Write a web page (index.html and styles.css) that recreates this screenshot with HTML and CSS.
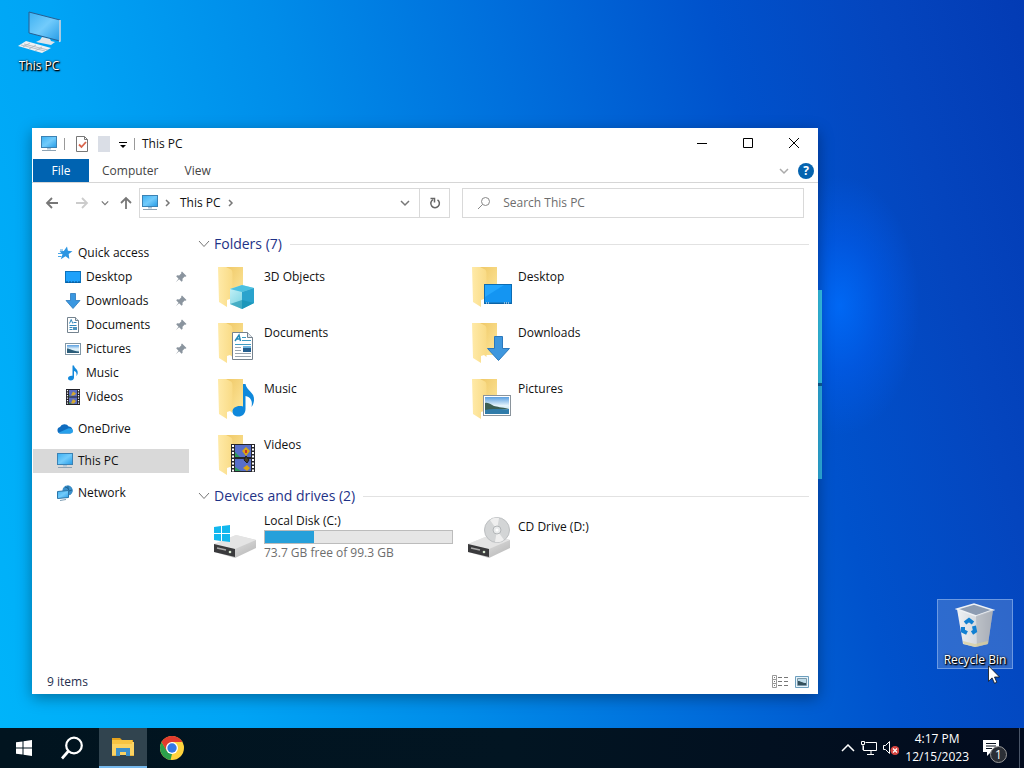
FILE: index.html
```html
<!DOCTYPE html>
<html lang="en">
<head>
	<meta charset="utf-8">
	<meta name="viewport" content="width=device-width, initial-scale=1">
	<title>This PC</title>
	<link rel="stylesheet" href="styles.css">
</head>
<body>
	<!-- icon sprite -->
	<svg class="sprite" aria-hidden="true">
		<defs>
			<linearGradient id="g-screen" x1="0" y1="0" x2="1" y2="1">
				<stop offset="0" stop-color="#3cb0f2"/><stop offset=".5" stop-color="#72cbfb"/><stop offset="1" stop-color="#259be6"/>
			</linearGradient>
			<linearGradient id="g-folder" x1="0" y1="0" x2="1" y2="0">
				<stop offset="0" stop-color="#ffeaa8"/><stop offset="1" stop-color="#f9db86"/>
			</linearGradient>
			<linearGradient id="g-back" x1="0" y1="0" x2="1" y2="1">
				<stop offset="0" stop-color="#efc765"/><stop offset="1" stop-color="#fde79c"/>
			</linearGradient>
			<linearGradient id="g-sky" x1="0" y1="0" x2="0" y2="1">
				<stop offset="0" stop-color="#5a9fe0"/><stop offset=".5" stop-color="#e4f3fb"/><stop offset="1" stop-color="#b6dcee"/>
			</linearGradient>
			<linearGradient id="g-drive" x1="0" y1="0" x2="1" y2="1">
				<stop offset="0" stop-color="#f3f3f3"/><stop offset="1" stop-color="#b4b4b4"/>
			</linearGradient>
			<linearGradient id="g-bin" x1="0" y1="0" x2="1" y2="0">
				<stop offset="0" stop-color="#eef1f4"/><stop offset=".6" stop-color="#d3d7dc"/><stop offset="1" stop-color="#a9afb9"/>
			</linearGradient>
			<linearGradient id="g-cube" x1="0" y1="0" x2="1" y2="1">
				<stop offset="0" stop-color="#c9f3f8"/><stop offset="1" stop-color="#5cc7da"/>
			</linearGradient>
		</defs>

		<symbol id="i-pc" viewBox="0 0 16 16">
			<rect x="0.5" y="0.5" width="15" height="11" fill="url(#g-screen)" stroke="#3b82b4"/>
			<path d="M6 12h4v1.500H6z" fill="#a9c3d6"/>
			<path d="M1 14.500h14" stroke="#8fa3b3" stroke-width="1"/>
		</symbol>
		<symbol id="i-pc-large" viewBox="0 0 44 44">
			<path d="M12 2l31 8v21L12 23z" fill="url(#g-screen)" stroke="#275f92" stroke-width="1"/>
			<path d="M43 10v21l-1 .5" fill="none" stroke="#d7e4ee" stroke-width="1.500"/>
			<path d="M25 27l8 2 1 2 4 1-4 3-15-3 4-2z" fill="#dfe5ea"/>
			<path d="M9 31l25 7-9 5L1 36z" fill="#eef1f4"/>
			<path d="M7 34l24 6M4 35l24 6M13 33l-7 4M19 35l-7 4M25 37l-7 4" stroke="#a9b3bd" stroke-width=".8"/>
		</symbol>
		<symbol id="i-star" viewBox="0 0 16 16">
			<path d="M10 1.500l.9 4.300 4.600.4-3.800 2.700.6 5.100-3.800-2.800-4.700 3 1.700-4.900L2.500 6.200l4.300-.3z" fill="#2d96e2"/>
			<path d="M1 8.500h4M1 11.500h3.500M3 5h3" stroke="#4aa6e6" stroke-width="1"/>
		</symbol>
		<symbol id="i-desktop" viewBox="0 0 16 16">
			<rect x="0.500" y="2.500" width="15" height="11" fill="#1ea1fb" stroke="#0b72bd"/>
			<path d="M1 13h14" stroke="#064f8a" stroke-dasharray="2 1"/>
		</symbol>
		<symbol id="i-down" viewBox="0 0 16 16">
			<path d="M5.500.500h5v7h4.500L8 15.500 1 7.500h4.500z" fill="#3a97e0" stroke="#2a78bd" stroke-width=".8"/>
		</symbol>
		<symbol id="i-doc" viewBox="0 0 16 16">
			<path d="M2.500.500h8l3 3v12h-11z" fill="#fff" stroke="#74838f"/>
			<path d="M10.500.500v3h3" fill="#dde5ea" stroke="#74838f"/>
			<path d="M4.500 6.500l1.700-4 1.600 4M8.500 5.500h3M4.500 8.500h7M4.500 10.500h3M4.500 12.500h3" fill="none" stroke="#2f88bd"/>
			<path d="M8 10h4v3H8z" fill="#4d93bd"/>
		</symbol>
		<symbol id="i-pic" viewBox="0 0 16 16">
			<rect x="0.500" y="2.500" width="15" height="11" fill="#fff" stroke="#8197a6"/>
			<path d="M2 4h12v8H2z" fill="url(#g-sky)"/>
			<path d="M2 7.500c3 0 5 2.500 12 3V12H2z" fill="#2b5d7a"/>
		</symbol>
		<symbol id="i-music" viewBox="0 0 16 16">
			<path d="M7.500.500h1.500c.3 3.200 4.300 3.500 3.700 7.700-.2 1.300-.7 2-1.300 2.800.6-3-.5-4.500-2.400-5v6.500c0 2-1.500 3-3.200 3-1.600 0-2.800-1-2.800-2.300 0-1.700 2.300-3 4.500-2.400z" fill="#1389dc"/>
		</symbol>
		<symbol id="i-video" viewBox="0 0 16 16">
			<path d="M1 0h14v16H1z" fill="#22222a"/>
			<path d="M4 1h8v6.500H4zM4 8.500h8V15H4z" fill="#5d6fc2"/>
			<path d="M8 2.500l3 2-2 2H6l1-2zM8 10l3 2-2 2.500H6l1-2.500z" fill="#d3a92e"/>
			<path d="M4 6l2.500 1.500H4zM4 13l3 2H4z" fill="#398a45"/>
			<path d="M2.500 1v14M13.500 1v14" stroke="#fff" stroke-width="1.200" stroke-dasharray="1.300 1.200"/>
		</symbol>
		<symbol id="i-cloud" viewBox="0 0 16 16">
			<path d="M3.500 12.500A3.300 3.300 0 0 1 3 6a5 5 0 0 1 8.700-.6 3.700 3.700 0 0 1 1.500 7.100z" fill="#0f6cbf"/>
			<path d="M3.500 12.500c-1 0-1.500-.3-2-.7L11 7.500c3-.8 5 .7 5 2.500s-1.300 2.500-2.800 2.500z" fill="#27a0ea"/>
		</symbol>
		<symbol id="i-network" viewBox="0 0 16 16">
			<path d="M10.500.5A5 5 0 1 1 7 9z" fill="#2c7fb8"/>
			<circle cx="10.500" cy="5.500" r="5" fill="#3b8fca"/>
			<path d="M8 2l3 1 1 3 3-1M11 1v3" fill="none" stroke="#1e6797"/>
			<path d="M.500 6.500l11-1v7l-11 1z" fill="url(#g-screen)" stroke="#2b75a8"/>
			<path d="M3 15.500l6-1" stroke="#7d9db3"/>
		</symbol>
		<symbol id="i-pin" viewBox="0 0 12 12">
			<path d="M7 .500L11.500 5l-1 .8-.8-.2-2.200 2.200.1 2-1 1-2.500-2.500L.800 11.300 3.500 7.700 1.200 5.300l1-1 2 .1 2.200-2.200-.2-.9z" fill="#8a949e"/>
		</symbol>

		<symbol id="i-folder" viewBox="0 0 48 48">
			<path d="M12 4h18v32H12z" fill="url(#g-back)"/>
			<path d="M5 4h8l5 2.500c1 .8 1.500 2 1.500 4V38l-2.500-2-3 1v7L6 39z" fill="url(#g-folder)"/>
		</symbol>
		<symbol id="i-f-3d" viewBox="0 0 48 48">
			<use href="#i-folder"/>
			<path d="M17 26l12-4 12 3v15l-12 6-12-5z" fill="url(#g-cube)"/>
			<path d="M17 26l12-4 12 3-12 4z" fill="#4cc0e0"/>
			<path d="M29 29l12-4v15l-12 6z" fill="#2aa3cd"/>
			<path d="M17 41l12-4 12 3-12 6z" fill="#158fae" opacity=".6"/>
		</symbol>
		<symbol id="i-f-desktop" viewBox="0 0 48 48">
			<use href="#i-folder"/>
			<rect x="17.500" y="21.500" width="27" height="19" fill="#24a6fd" stroke="#0c6cb3"/>
			<path d="M18 34L37 22h7v17H18z" fill="#1495f2"/>
			<path d="M18 40h26" stroke="#0a5a9a"/>
			<path d="M19 40h3M37 40h6" stroke="#fff" stroke-dasharray="1 1"/>
		</symbol>
		<symbol id="i-f-doc" viewBox="0 0 48 48">
			<use href="#i-folder"/>
			<path d="M19.500 13.500h15l5 5v22h-20z" fill="#fff" stroke="#75818c"/>
			<path d="M34.500 13.500v5h5" fill="#e3e8ec" stroke="#75818c"/>
			<path d="M22 22l4-6 1.500 6M23 20h4" fill="none" stroke="#2389b8" stroke-width="1.500"/>
			<path d="M29 18.500h4M29 21.500h9M22 25.500h16" stroke="#3e9bc2"/>
			<path d="M22 28.500h6M22 31.500h6M22 34.500h16M22 37.500h16" stroke="#9aa5af"/>
			<path d="M30 27h8v6h-8z" fill="#265f8f"/><path d="M30 27h8v2h-8z" fill="#6fb7e0"/>
		</symbol>
		<symbol id="i-f-down" viewBox="0 0 48 48">
			<use href="#i-folder"/>
			<path d="M27.500 17.500h8v12h7L31.500 41.500 20.500 29.500h7z" fill="#3e97de" stroke="#2b78bd"/>
		</symbol>
		<symbol id="i-f-music" viewBox="0 0 48 48">
			<use href="#i-folder"/>
			<path d="M30 9h2.500c1 7 9.500 8 8.500 16.500-.3 2.500-1 4.500-2.500 6.500 1.500-6-1-10-6-11v13c0 5-3.500 7.500-7 7.500s-6-2-6-5c0-4 5-6.500 10.500-5z" fill="#0f88db"/>
		</symbol>
		<symbol id="i-f-pic" viewBox="0 0 48 48">
			<use href="#i-folder"/>
			<rect x="16.500" y="20.500" width="27" height="20" fill="#fff" stroke="#8a949c"/>
			<path d="M18 22h24v17H18z" fill="url(#g-sky)"/>
			<path d="M18 28c4-1 6 2 9 3s7 1 15 3l-24 2z" fill="#3c5f54"/>
			<path d="M18 35c8-2 16 0 24-1v5H18z" fill="#2f7ba9"/>
		</symbol>
		<symbol id="i-f-video" viewBox="0 0 48 48">
			<use href="#i-folder"/>
			<path d="M18 13h24v28H18z" fill="#26262c"/>
			<path d="M22 14h16v12H22zM22 28h16v12H22z" fill="#586fc9"/>
			<path d="M33 16l4 4-4 5-4-5zM34 34l3 3-3 3-4-3z" fill="#d9a514"/>
			<path d="M22 21l5 5h-5zM22 36l6 4h-6z" fill="#2f9a5b"/>
			<path d="M33 25l3 4-2 3-3-3z" stroke="#1b1b22" fill="#4b4020"/>
			<path d="M32 19h2v3h-2z" fill="#c7342b"/>
			<path d="M20 14v27M40 14v27" stroke="#fff" stroke-width="2" stroke-dasharray="2 1.500"/>
		</symbol>
		<symbol id="i-drive" viewBox="0 0 48 48">
			<path d="M1 31l22-9 20 5v8L22 45 1 39z" fill="url(#g-drive)"/>
			<path d="M1 31l22-9 20 5-21 9z" fill="#e4e4e4"/>
			<path d="M1 31l21 5v8L1 39z" fill="#3a3a3c"/>
			<path d="M4 35l9 2" stroke="#aaa" stroke-width="1.500"/>
			<circle cx="17" cy="39" r="1.300" fill="#d8e8d0"/>
		</symbol>
		<symbol id="i-hdd" viewBox="0 0 48 48">
			<use href="#i-drive"/>
			<path d="M1 14l7-1v7H1zM9 13l8-1v8H9zM1 21h7v7l-7-1zM9 21h8v8l-8-1z" fill="#12b7ee"/>
		</symbol>
		<symbol id="i-cd" viewBox="0 0 48 48">
			<use href="#i-drive"/>
			<circle cx="30" cy="17" r="12.500" fill="#d3d5d6" stroke="#bcbfc1"/>
			<path d="M30 17L23 7a12 12 0 0 1 9-2zM30 17l7 10a12 12 0 0 1-9 2z" fill="#efefef"/>
			<circle cx="30" cy="17" r="4" fill="#e9ebec" stroke="#b3b6b8"/>
			<circle cx="30" cy="17" r="1.500" fill="#fff"/>
		</symbol>
		<symbol id="i-bin" viewBox="0 -3 44 48">
			<path d="M4 6l17-5 19 6-5 34-13 3-12-3z" fill="url(#g-bin)"/>
			<path d="M4 6l17-5 19 6-17 6z" fill="#8d9cb2" stroke="#eef1f5" stroke-width="1.500"/>
			<path d="M23 13l17-6-5 34-11 3z" fill="#a9adb5" opacity=".6"/>
			<path d="M10 38l12 3 13-3-.5 3-12.500 3-11.500-3z" fill="#d9cf98" opacity=".7"/>
			<path d="M12 20l4-3 4 3M21 23l1 5-3 2M14 30l-4-2 0-4" fill="none" stroke="#1180d2" stroke-width="4"/>
		</symbol>

		<symbol id="i-chevron" viewBox="0 0 10 10">
			<path d="M1 3l4 4 4-4" fill="none" stroke="currentColor" stroke-width="1.500"/>
		</symbol>
		<symbol id="i-chevron-right" viewBox="0 0 10 10">
			<path d="M3 2l3 3-3 3" fill="none" stroke="currentColor" stroke-width="1.500"/>
		</symbol>
		<symbol id="i-arrow" viewBox="0 0 14 14">
			<path d="M13 7H2M7 2L2 7l5 5" fill="none" stroke="currentColor" stroke-width="1.800"/>
		</symbol>
	</svg>

	<main class="desktop">
		<button class="shortcut shortcut-pc" type="button">
			<svg width="44" height="44"><use href="#i-pc-large"/></svg>
			<span>This PC</span>
		</button>

		<div class="logo-edge"></div>

		<section class="window" aria-label="This PC">
			<header class="titlebar">
				<svg width="16" height="16"><use href="#i-pc"/></svg>
				<span class="divider"></span>
				<button class="quick-btn" type="button" aria-label="Properties">
					<svg width="14" height="16" viewBox="0 0 14 16"><path d="M1.500.500h8l3 3v12h-11z" fill="#fff" stroke="#777"/><path d="M9.500.500v3h3" fill="none" stroke="#777"/><path d="M4 8.500l2.500 2.500L11 6" fill="none" stroke="#d9654c" stroke-width="1.800"/></svg>
				</button>
				<button class="quick-btn" type="button" aria-label="New folder">
					<svg width="14" height="16" viewBox="0 0 14 16"><path d="M1 0h12v16H1z" fill="#dadee6"/></svg>
				</button>
				<button class="quick-btn quick-more" type="button" aria-label="Customize toolbar">
					<svg width="8" height="8" viewBox="0 0 8 8"><path d="M0 1.500h8" stroke="#000"/><path d="M1 4h6L4 7z"/></svg>
				</button>
				<span class="divider"></span>
				<h1 class="title">This PC</h1>
				<div class="win-btns">
					<button type="button" aria-label="Minimize"><svg width="10" height="10" viewBox="0 0 10 10"><path d="M0 5.500h10"/></svg></button>
					<button type="button" aria-label="Maximize"><svg width="10" height="10" viewBox="0 0 10 10"><path d="M.5.500h9v9h-9z"/></svg></button>
					<button type="button" aria-label="Close"><svg width="10" height="10" viewBox="0 0 10 10"><path d="M0 0l10 10M10 0L0 10"/></svg></button>
				</div>
			</header>

			<nav class="ribbon" aria-label="Ribbon">
				<button class="tab tab-file" type="button">File</button>
				<button class="tab" type="button">Computer</button>
				<button class="tab" type="button">View</button>
				<button class="expand" type="button" aria-label="Expand the ribbon"><svg width="10" height="10"><use href="#i-chevron"/></svg></button>
				<button class="help" type="button" aria-label="Help">?</button>
			</nav>

			<div class="toolbar">
				<div class="history">
					<button type="button" aria-label="Back"><svg width="14" height="14"><use href="#i-arrow"/></svg></button>
					<button class="off" type="button" aria-label="Forward"><svg class="flip" width="14" height="14"><use href="#i-arrow"/></svg></button>
					<button class="recent" type="button" aria-label="Recent locations"><svg width="8" height="8"><use href="#i-chevron"/></svg></button>
					<button class="up" type="button" aria-label="Up"><svg class="turn" width="14" height="14"><use href="#i-arrow"/></svg></button>
				</div>
				<div class="address">
					<svg width="16" height="16"><use href="#i-pc"/></svg>
					<svg class="crumb-arrow" width="10" height="10"><use href="#i-chevron-right"/></svg>
					<a href="#">This PC</a>
					<svg class="crumb-arrow" width="10" height="10"><use href="#i-chevron-right"/></svg>
					<button class="previous" type="button" aria-label="Previous locations"><svg width="10" height="10"><use href="#i-chevron"/></svg></button>
					<button class="refresh" type="button" aria-label="Refresh">
						<svg width="12" height="12" viewBox="0 0 12 12"><path d="M8.500 2.800A4.300 4.300 0 1 1 4 2.600" fill="none" stroke="#666" stroke-width="1.500"/><path d="M1.500 1.500h4v4" fill="none" stroke="#666" stroke-width="1.500"/></svg>
					</button>
				</div>
				<label class="search">
					<svg width="14" height="14" viewBox="0 0 14 14"><circle cx="8.500" cy="5.500" r="4" fill="none" stroke="#888"/><path d="M5.500 8.500L1 13" stroke="#888"/></svg>
					<input type="text" placeholder="Search This PC" aria-label="Search This PC">
				</label>
			</div>

			<div class="explorer">
				<nav class="sidebar" aria-label="Navigation pane">
					<a href="#"><svg width="16" height="16"><use href="#i-star"/></svg>Quick access</a>
					<a class="sub" href="#"><svg width="16" height="16"><use href="#i-desktop"/></svg>Desktop<svg class="pin" width="12" height="12"><use href="#i-pin"/></svg></a>
					<a class="sub" href="#"><svg width="16" height="16"><use href="#i-down"/></svg>Downloads<svg class="pin" width="12" height="12"><use href="#i-pin"/></svg></a>
					<a class="sub" href="#"><svg width="16" height="16"><use href="#i-doc"/></svg>Documents<svg class="pin" width="12" height="12"><use href="#i-pin"/></svg></a>
					<a class="sub" href="#"><svg width="16" height="16"><use href="#i-pic"/></svg>Pictures<svg class="pin" width="12" height="12"><use href="#i-pin"/></svg></a>
					<a class="sub" href="#"><svg width="16" height="16"><use href="#i-music"/></svg>Music</a>
					<a class="sub" href="#"><svg width="16" height="16"><use href="#i-video"/></svg>Videos</a>
					<a class="root" href="#"><svg width="16" height="16"><use href="#i-cloud"/></svg>OneDrive</a>
					<a class="root active" href="#"><svg width="16" height="16"><use href="#i-pc"/></svg>This PC</a>
					<a class="root" href="#"><svg width="16" height="16"><use href="#i-network"/></svg>Network</a>
				</nav>

				<div class="content">
					<h2 class="group-title"><svg width="12" height="12" viewBox="0 0 12 12"><path d="M1 3l5 5.500L11 3" fill="none" stroke="#777"/></svg>Folders (7)</h2>
					<div class="tiles">
						<a class="tile" href="#"><svg width="48" height="48"><use href="#i-f-3d"/></svg><span>3D Objects</span></a>
						<a class="tile" href="#"><svg width="48" height="48"><use href="#i-f-desktop"/></svg><span>Desktop</span></a>
						<a class="tile" href="#"><svg width="48" height="48"><use href="#i-f-doc"/></svg><span>Documents</span></a>
						<a class="tile" href="#"><svg width="48" height="48"><use href="#i-f-down"/></svg><span>Downloads</span></a>
						<a class="tile" href="#"><svg width="48" height="48"><use href="#i-f-music"/></svg><span>Music</span></a>
						<a class="tile" href="#"><svg width="48" height="48"><use href="#i-f-pic"/></svg><span>Pictures</span></a>
						<a class="tile" href="#"><svg width="48" height="48"><use href="#i-f-video"/></svg><span>Videos</span></a>
					</div>

					<h2 class="group-title"><svg width="12" height="12" viewBox="0 0 12 12"><path d="M1 3l5 5.500L11 3" fill="none" stroke="#777"/></svg>Devices and drives (2)</h2>
					<div class="tiles drives">
						<a class="tile drive" href="#">
							<svg width="48" height="48"><use href="#i-hdd"/></svg>
							<span class="drive-info">
								<span>Local Disk (C:)</span>
								<span class="usage"><span class="used" style="width: 26%"></span></span>
								<span class="free">73.7 GB free of 99.3 GB</span>
							</span>
						</a>
						<a class="tile" href="#"><svg width="48" height="48"><use href="#i-cd"/></svg><span>CD Drive (D:)</span></a>
					</div>
				</div>
			</div>

			<footer class="status">
				<span>9 items</span>
				<div class="views">
					<button type="button" aria-label="Details view">
						<svg width="16" height="14" viewBox="0 0 16 14"><path d="M.5.500h4v4h-4zM.5 4.500h4v4h-4zM.5 8.500h4v4h-4z" fill="none" stroke="#999"/><path d="M2 2.500h1M2 6.500h1M2 10.500h1M6 2.500h4M12 2.500h4M6 6.500h4M12 6.500h4M6 10.500h4M12 10.500h4" stroke="#777"/></svg>
					</button>
					<button type="button" aria-label="Large icons view">
						<svg width="14" height="12" viewBox="0 0 14 12"><path d="M.5.500h13v11H.500z" fill="#e6f3fb" stroke="#6d9fbe"/><path d="M2.500 2.500h9v7h-9z" fill="#bddbe9" stroke="#7c98a8"/><path d="M3 5c3 0 4 2 8 2v2H3z" fill="#34505c"/></svg>
					</button>
				</div>
			</footer>
		</section>

		<button class="shortcut shortcut-bin" type="button">
			<svg width="44" height="48"><use href="#i-bin"/></svg>
			<span>Recycle Bin</span>
		</button>
		<svg class="cursor" width="12" height="19" viewBox="0 0 12 19"><path d="M.5.800v15.500l3.600-3.400 2.400 5.400 2.300-1-2.300-5.300h5z" fill="#fff" stroke="#111" stroke-width=".8"/></svg>
	</main>

	<footer class="taskbar">
		<button class="task" type="button" aria-label="Start">
			<svg width="16" height="16" viewBox="0 0 16 16"><path d="M0 2.300l6.500-.9v6.100H0zM7.500 1.200L16 0v7.500H7.500zM0 8.500h6.500v6.100L0 13.700zM7.500 8.500H16V16l-8.500-1.200z" fill="#fff"/></svg>
		</button>
		<button class="task" type="button" aria-label="Search">
			<svg width="24" height="24" viewBox="0 0 24 24"><circle cx="14" cy="9.500" r="7.800" fill="none" stroke="#fff" stroke-width="2.200"/><path d="M8.500 15L2 22.500" stroke="#fff" stroke-width="2.700"/></svg>
		</button>
		<button class="task task-open" type="button" aria-label="File Explorer">
			<svg width="24" height="20" viewBox="0 0 24 20"><path d="M1 1h8l2 2h11v4H1z" fill="#e5a21d"/><path d="M1 5h22v13H1z" fill="#fbd362"/><path d="M1 3h20v4H1z" fill="#f7c443"/><path d="M5 19v-8h14v8h-4v-4H9v4z" fill="#3d8fc9"/><path d="M1 18h4v1H1zM19 18h4v1h-4z" fill="#e8b53f"/></svg>
		</button>
		<button class="task" type="button" aria-label="Google Chrome">
			<svg width="24" height="24" viewBox="0 0 24 24">
				<circle cx="12" cy="12" r="12" fill="#ffd33d"/>
				<path d="M1.600 6L7 15l5 3-1.500 5.900A12 12 0 0 1 1.600 6z" fill="#2da04c"/>
				<path d="M12 6h10.400A12 12 0 0 0 1.600 6L6.800 15z" fill="#e23b2e"/>
				<circle cx="12" cy="12" r="6" fill="#fff"/>
				<circle cx="12" cy="12" r="4.700" fill="#3478e5"/>
			</svg>
		</button>

		<div class="tray">
			<button type="button" aria-label="Show hidden icons"><svg width="14" height="8" viewBox="0 0 14 8"><path d="M1 7l6-6 6 6" fill="none" stroke="#fff" stroke-width="1.500"/></svg></button>
			<button type="button" aria-label="Network">
				<svg width="16" height="14" viewBox="0 0 16 14"><path d="M4.500 1.500h11v8h-13V5M10 10v3M6 13.500h7M.5.500h3v3h-3zM2 4v5" fill="none" stroke="#fff"/></svg>
			</button>
			<button type="button" aria-label="Volume muted">
				<svg width="16" height="14" viewBox="0 0 16 14"><path d="M.5 4.500h2l4-4v12l-4-4h-2z" fill="none" stroke="#fff"/><circle cx="12" cy="9.500" r="4.500" fill="#d64541"/><path d="M10 7.500l4 4M14 7.500l-4 4" stroke="#fff" stroke-width="1.200"/></svg>
			</button>
			<button class="clock" type="button"><span>4:17 PM</span><span>12/15/2023</span></button>
			<button class="notify" type="button" aria-label="Notifications">
				<svg width="18" height="18" viewBox="0 0 18 18"><path d="M1 1h16v12H9l-4 4v-4H1z" fill="#fff"/><path d="M4 4.500h10M4 7h10M4 9.500h6" stroke="#0a1320"/></svg>
				<span class="badge">1</span>
			</button>
		</div>
		<button class="show-desktop" type="button" aria-label="Show desktop"></button>
	</footer>
</body>
</html>
```
FILE: styles.css
```css
*{
	margin: 0;
	padding: 0;
	box-sizing: border-box;
}
body{
	display: flex;
	flex-direction: column;
	height: 100vh;
	overflow: hidden;
	font-family: "Open Sans", "Noto Sans", sans-serif;
	font-size: 12px;
	line-height: 16px;
	color: #111;
}
button, input{
	font: inherit;
	color: inherit;
	background: none;
	border: none;
}
button{
	display: flex;
	align-items: center;
	justify-content: center;
}
a{
	color: inherit;
	text-decoration: none;
}
svg{
	display: block;
	flex: none;
}
.sprite{
	position: absolute;
	width: 0;
	height: 0;
}

/* desktop */
.desktop{
	position: relative;
	flex: 1;
	background:
		radial-gradient(ellipse 80px 130px at 82% 42%, rgba(0,110,255,.8) 0, rgba(0,100,255,.4) 50%, rgba(0,100,255,0) 100%),
		linear-gradient(75deg, #00b4fa 0%, #00a4f5 20%, #008ce9 38%, #006fdc 56%, #0052cc 74%, #0445be 88%, #033bb4 100%);
}
.shortcut{
	position: absolute;
	flex-direction: column;
	width: 76px;
	gap: 4px;
	color: #fff;
	border: 1px solid transparent;
	text-shadow: 1px 1px 2px #000, 0 0 2px #000, 1px 1px 1px #000;
}
.shortcut-pc{
	top: 9px;
	left: 1px;
}
.shortcut-bin{
	right: 11px;
	bottom: 59px;
	height: 70px;
	background: rgba(150,180,225,.3);
	border-color: rgba(150,185,240,.6);
}
.cursor{
	position: absolute;
	right: 24px;
	bottom: 44px;
}
/* bright edge of the wallpaper logo, behind the window */
.logo-edge{
	position: absolute;
	right: 202px;
	top: 290px;
	width: 4px;
	height: 189px;
	background: linear-gradient(#35c8f0 0 93px, #0c5f9b 93px 96px, #2fb4e6 96px);
}

/* window */
.window{
	position: absolute;
	top: 128px;
	right: 206px;
	bottom: 34px;
	left: 32px;
	display: flex;
	flex-direction: column;
	background: #fff;
	box-shadow: 0 4px 14px rgba(0,0,0,.35);
}
.titlebar{
	display: flex;
	align-items: center;
	height: 31px;
	padding: 0 1px 0 9px;
}
.divider{
	width: 1px;
	height: 12px;
	margin: 0 10px 0 7px;
	background: #999;
}
.quick-btn{
	margin-right: 8px;
}
.quick-more{
	margin-right: 0;
	padding-top: 2px;
}
.title{
	flex: 1;
	margin-left: -3px;
	font-size: 12px;
	font-weight: normal;
}
.win-btns{
	display: flex;
	align-self: flex-start;
}
.win-btns button{
	width: 46px;
	height: 30px;
}
.win-btns path{
	fill: none;
	stroke: #000;
}

.ribbon{
	display: flex;
	align-items: center;
	height: 24px;
	padding: 0 4px 0 1px;
	border-bottom: 1px solid #d6d6d6;
	color: #444;
}
.tab{
	height: 23px;
	padding: 0 13px;
}
.tab-file{
	width: 56px;
	background: #0063b1;
	color: #fff;
}
.expand{
	margin-left: auto;
	padding: 0 9px;
	color: #aaa;
}
.help{
	width: 16px;
	height: 16px;
	border-radius: 50%;
	background: #0563af;
	color: #fff;
	font-weight: bold;
}

.toolbar{
	display: flex;
	align-items: center;
	padding: 5px 14px 5px 13px;
	color: #777;
}
.history{
	display: flex;
	align-items: center;
	width: 94px;
}
.history button{
	margin-right: 16px;
}
.history .off{
	color: #ccc;
	margin-right: 12px;
}
.history .recent{
	margin-right: 10px;
}
.history .up{
	margin-right: 0;
}
.flip{
	transform: rotate(180deg);
}
.turn{
	transform: rotate(90deg);
}
.address{
	width: 41%;
	display: flex;
	align-items: center;
	height: 30px;
	padding-left: 2px;
	border: 1px solid #d9d9d9;
	color: #111;
}
.crumb-arrow{
	margin: 0 7px 0 5px;
	color: #777;
}
.previous{
	margin-left: auto;
	width: 28px;
	height: 28px;
	color: #777;
}
.refresh{
	width: 30px;
	height: 28px;
	border-left: 1px solid #d9d9d9;
}
.search{
	flex: 1;
	display: flex;
	align-items: center;
	height: 30px;
	gap: 12px;
	margin-left: 12px;
	padding-left: 14px;
	border: 1px solid #d9d9d9;
}
.search input{
	flex: 1;
	min-width: 0;
	outline: none;
}
.search input::placeholder{
	color: #6d6d6d;
	opacity: 1;
}

.explorer{
	flex: 1;
	display: flex;
	min-height: 0;
}
.sidebar{
	width: 158px;
	padding: 18px 1px 0;
}
.sidebar a{
	display: flex;
	align-items: center;
	gap: 5px;
	height: 24px;
	padding-left: 24px;
}
.sidebar .sub{
	padding-left: 32px;
}
.sidebar .root{
	margin-top: 8px;
}
.sidebar .active{
	background: #d9d9d9;
}
.pin{
	margin-left: auto;
	margin-right: 2px;
}

.content{
	flex: 1;
	padding: 12px 9px 0 8px;
}
.group-title{
	display: flex;
	align-items: center;
	gap: 4px;
	height: 18px;
	font-size: 14px;
	line-height: 18px;
	font-weight: normal;
	color: #1e3287;
}
.group-title:after{
	content: "";
	flex: 1;
	height: 1px;
	margin-left: 4px;
	background: #e2e2e2;
}
.tiles{
	display: grid;
	grid-template-columns: repeat(auto-fill, 254px);
	padding: 10px 0 0 15px;
}
.drives{
	padding-top: 8px;
}
.tile{
	display: flex;
	gap: 3px;
	height: 56px;
	align-items: flex-start;
}
.tile > span{
	padding-top: 6px;
}
.tile > .drive-info{
	display: flex;
	flex-direction: column;
	width: 189px;
	padding-top: 0;
}
.usage{
	height: 14px;
	margin: 1px 0;
	border: 1px solid #bcbcbc;
	background: #e6e6e6;
}
.used{
	display: block;
	height: 100%;
	background: #26a0da;
}
.free{
	color: #6d6d6d;
}

.status{
	display: flex;
	align-items: center;
	justify-content: space-between;
	height: 24px;
	padding: 0 9px 0 15px;
	color: #1f2f4f;
}
.views{
	display: flex;
	align-items: center;
	gap: 7px;
}

/* taskbar */
.taskbar{
	display: flex;
	height: 40px;
	background: linear-gradient(90deg, #01141f 0%, #021522 50%, #020b1e 100%);
	color: #fff;
}
.task{
	width: 48px;
}
.task-open{
	margin: 0 1px 0 3px;
	background: #31444f;
	border-bottom: 2px solid #76b9ed;
}
.tray{
	display: flex;
	align-items: center;
	gap: 6px;
	margin-left: auto;
}
.clock{
	flex-direction: column;
	line-height: 18px;
}
.notify{
	position: relative;
	width: 32px;
	height: 40px;
}
.badge{
	position: absolute;
	right: 0;
	bottom: 5px;
	width: 17px;
	height: 17px;
	border: 1px solid #999;
	border-radius: 50%;
	background: #2b2f36;
	line-height: 15px;
}
.show-desktop{
	width: 5px;
	margin-left: 12px;
	border-left: 1px solid #4a5568;
}
```
